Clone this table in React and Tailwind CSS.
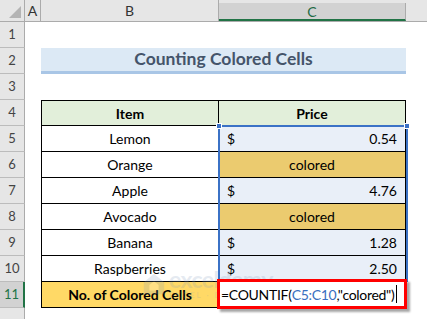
import React from "react";

const rows = [
  { n: 5, item: "Lemon", price: "0.54" },
  { n: 6, item: "Orange", colored: true },
  { n: 7, item: "Apple", price: "4.76" },
  { n: 8, item: "Avocado", colored: true },
  { n: 9, item: "Banana", price: "1.28" },
  { n: 10, item: "Raspberries", price: "2.50" },
];

function RowHead({ n, active }) {
  return (
    <div
      className={
        active
          ? "w-[25px] h-[26px] shrink-0 flex items-center justify-center bg-[#d2d2d2] text-[#217346] border-b border-[#bcbcbc] border-r-2 border-r-[#217346] text-[13px]"
          : "w-[25px] h-[26px] shrink-0 flex items-center justify-center bg-[#e6e6e6] text-[#444] border-b border-[#bcbcbc] border-r border-r-[#ababab] text-[13px]"
      }
    >
      {n}
    </div>
  );
}

function Watermark() {
  return (
    <div className="absolute left-[142px] top-[268px] flex items-center gap-[3px] opacity-20 pointer-events-none">
      <svg width="24" height="24" viewBox="0 0 26 26">
        <path d="M13 2 L24 11 L24 24 L2 24 L2 11 Z" fill="#7f9bbd" />
        <path d="M8 14 L13 10 L18 14 L18 20 L8 20 Z" fill="#ffffff" />
      </svg>
      <div className="flex flex-col leading-none">
        <span className="text-[23px] font-bold text-[#7f9bbd] tracking-tight">exceldemy</span>
        <span className="text-[8px] text-[#7f9bbd] tracking-[2px]">EXCEL · DATA · BI</span>
      </div>
    </div>
  );
}

export default function App() {
  return (
    <div className="relative w-[427px] h-[319px] overflow-hidden bg-white font-['Lato',sans-serif] text-black">
      {/* column headers */}
      <div className="flex h-[22px] bg-[#e6e6e6] border-b border-[#ababab] text-[14px] text-[#333]">
        <div className="relative w-[25px] shrink-0 border-r border-[#ababab]">
          <div className="absolute right-[3px] bottom-[3px] w-0 h-0 border-l-[12px] border-l-transparent border-b-[12px] border-b-[#b4b4b4]" />
        </div>
        <div className="w-[16px] shrink-0 border-r border-[#ababab] flex items-center justify-center">A</div>
        <div className="w-[178px] shrink-0 border-r border-[#ababab] flex items-center justify-center">B</div>
        <div className="w-[187px] shrink-0 mt-[3px] bg-[#d2d2d2] border-r border-[#ababab] border-b-2 border-b-[#217346] flex items-center justify-center text-[#1e6b45]">
          C
        </div>
        <div className="flex-1" />
      </div>

      {/* row 1 */}
      <div className="flex">
        <RowHead n={1} />
      </div>
      {/* row 2 */}
      <div className="flex">
        <RowHead n={2} />
        <div className="w-[16px] shrink-0" />
        <div className="w-[365px] shrink-0 h-[26px] bg-[#dce9f5] border-b-[3px] border-[#a9c6e6] flex items-center justify-center font-bold text-[17.5px] text-[#44546a]">
          Counting Colored Cells
        </div>
      </div>
      {/* row 3 */}
      <div className="flex">
        <RowHead n={3} />
      </div>
      {/* row 4 header */}
      <div className="flex">
        <RowHead n={4} />
        <div className="w-[16px] shrink-0" />
        <div className="w-[178px] shrink-0 h-[26px] bg-[#e2efda] border border-black flex items-center justify-center font-bold text-[14px]">
          Item
        </div>
        <div className="w-[187px] shrink-0 h-[26px] bg-[#e2efda] border-y border-r border-black flex items-center justify-center font-bold text-[14px]">
          Price
        </div>
      </div>
      {rows.map((r) => (
        <div className="flex" key={r.n}>
          <RowHead n={r.n} />
          <div className="w-[16px] shrink-0" />
          <div className="w-[178px] shrink-0 h-[26px] border-x border-b border-black flex items-center justify-center text-[14px]">
            {r.item}
          </div>
          {r.colored ? (
            <div className="w-[187px] shrink-0 h-[26px] bg-[#ebcb6f] border-r border-b border-black flex items-center justify-center text-[14px]">
              colored
            </div>
          ) : (
            <div className="w-[187px] shrink-0 h-[26px] bg-[#e9eff8] border-r border-b border-black flex items-center justify-between px-[8px] text-[14px]">
              <span>$</span>
              <span>{r.price}</span>
            </div>
          )}
        </div>
      ))}
      {/* row 11 */}
      <div className="flex">
        <RowHead n={11} active />
        <div className="w-[16px] shrink-0" />
        <div className="w-[178px] shrink-0 h-[26px] bg-[#ffd966] border-x border-b border-black flex items-center justify-center font-bold text-[14px]">
          No. of Colored Cells
        </div>
        <div className="w-[187px] shrink-0 h-[26px] border-r border-b border-black" />
      </div>
      {/* row 12 */}
      <div className="flex">
        <div className="w-[25px] h-[26px] shrink-0 bg-[#e6e6e6] border-b border-[#bcbcbc] border-r border-r-[#ababab]" />
      </div>

      <Watermark />

      {/* selection C5:C10 */}
      <div className="absolute left-[218px] top-[125px] w-[190px] h-[157px] border-2 border-[#3b72c6] pointer-events-none" />
      <div className="absolute left-[216px] top-[123px] w-[6px] h-[6px] bg-[#3b72c6] border border-white" />
      <div className="absolute left-[404px] top-[123px] w-[6px] h-[6px] bg-[#3b72c6] border border-white" />

      {/* edit box */}
      <div className="absolute left-[217px] top-[279px] w-[190px] h-[30px] bg-white border-[3px] border-[#ff0000] shadow-[3px_3px_2px_rgba(0,0,0,0.35)] flex items-center pl-[1px] text-[14px] tracking-[-0.3px] whitespace-nowrap">
        <span className="shrink-0">=COUNTIF(</span>
        <span className="shrink-0 text-[#3a6fc0]">C5:C10</span>
        <span className="shrink-0">,"colored")</span>
        <span className="shrink-0 ml-[2px] w-px h-[18px] bg-black" />
      </div>
    </div>
  );
}
